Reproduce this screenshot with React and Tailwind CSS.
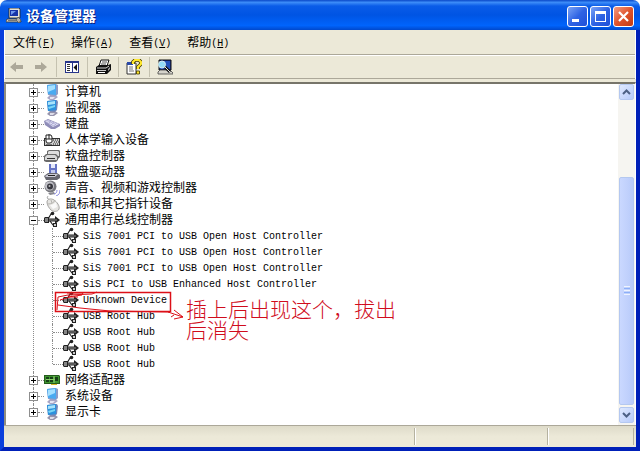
import { useState } from 'react'

const MENUS = [
  { label: '文件', accessKey: 'F' },
  { label: '操作', accessKey: 'A' },
  { label: '查看', accessKey: 'V' },
  { label: '帮助', accessKey: 'H' },
]

const DEVICES = [
  { name: '计算机', icon: ComputerIcon },
  { name: '监视器', icon: MonitorIcon },
  { name: '键盘', icon: KeyboardIcon },
  { name: '人体学输入设备', icon: HidIcon },
  { name: '软盘控制器', icon: FloppyControllerIcon },
  { name: '软盘驱动器', icon: FloppyDriveIcon },
  { name: '声音、视频和游戏控制器', icon: SoundIcon },
  { name: '鼠标和其它指针设备', icon: MouseIcon },
  {
    name: '通用串行总线控制器',
    icon: UsbIcon,
    children: [
      { name: 'SiS 7001 PCI to USB Open Host Controller' },
      { name: 'SiS 7001 PCI to USB Open Host Controller' },
      { name: 'SiS 7001 PCI to USB Open Host Controller' },
      { name: 'SiS PCI to USB Enhanced Host Controller' },
      { name: 'Unknown Device', marked: true },
      { name: 'USB Root Hub' },
      { name: 'USB Root Hub' },
      { name: 'USB Root Hub' },
      { name: 'USB Root Hub' },
    ],
  },
  { name: '网络适配器', icon: NetworkIcon },
  { name: '系统设备', icon: ComputerIcon },
  { name: '显示卡', icon: MonitorIcon },
]

function Icon({ children, className = 'size-4' }) {
  return (
    <svg viewBox="0 0 16 16" className={`shrink-0 ${className}`} aria-hidden="true">
      {children}
    </svg>
  )
}

function ComputerIcon() {
  return (
    <Icon>
      <path d="M3 14l3-3h5l3 2-4 3H6z" fill="#a9a6c4" />
      <path d="M3 1l9-1 2 1v9l-2 2-8-1z" fill="#8c9cc8" />
      <path d="M3 1l9-1v11l-8-1z" fill="#4aaaf0" />
      <path d="M4 2l7-1v4L4 8z" fill="#a5e0ff" />
      <path d="M6 13h5l-2 2H6z" fill="#e6e4f2" />
    </Icon>
  )
}

function MonitorIcon() {
  return (
    <Icon>
      <path d="M3 14l3-3h5l3 2-4 3H6z" fill="#9794ac" />
      <path d="M3 1l10-1 1 2-1 8-2 2-7-1z" fill="#7186ba" />
      <path d="M3 1l9-1v10l-8 1z" fill="#2b91dd" />
      <path d="M4 2l7-1v3L4 5z" fill="#a7e3fb" />
      <path d="M4 7l7-2v2L5 9z" fill="#79d5f5" />
      <path d="M6 13h5l-2 2H6z" fill="#dedde9" />
    </Icon>
  )
}

function KeyboardIcon() {
  return (
    <Icon>
      <path d="M0 5l4-2 12 5v2l-5 3H7L1 9z" fill="#8f8db8" />
      <path d="M1 5l3-1 11 4-6 3z" fill="#e0e0f4" />
      <path d="M2 6l8 4M3 4.500l9 4M4 8l3-3M7 9l3-3M10 10l3-3" stroke="#a3a1cc" strokeWidth=".7" />
    </Icon>
  )
}

function HidIcon() {
  return (
    <Icon>
      <path d="M0 6h16v8H0z" fill="#333" />
      <path d="M1 7h14v6H1z" fill="#d0d0d0" />
      <path d="M9 8h1m1 0h1m1 0h1M10 10h1m1 0h1m1 0h1M9 12h1m1 0h1m1 0h1" stroke="#222" />
      <path d="M2 3h5l1 2v5l-2 1H3L2 9z" fill="#fff" stroke="#222" />
      <path d="M5 2v5M2 7h6" stroke="#222" fill="none" />
      <path d="M2 13h6" stroke="#222" />
    </Icon>
  )
}

function FloppyControllerIcon() {
  return (
    <Icon>
      <path d="M3 3l2-1h10l1 1v6l-2 2H3z" fill="#6a6a6a" />
      <path d="M4 4l1-1h9l1 1v4H4z" fill="#dedede" />
      <path d="M0 8l2-2h10l2 2v4l-2 2H2l-2-1z" fill="#6a6a6a" />
      <path d="M1 9l2-2h8l2 2v3H1z" fill="#d8d8d8" />
      <path d="M3 10h8v1H3z" fill="#333" />
    </Icon>
  )
}

function FloppyDriveIcon() {
  return (
    <Icon>
      <path d="M5 0h8v10H5z" fill="#6674c4" />
      <path d="M7 0h4v4H7z" fill="#e5e9fa" />
      <path d="M7 6h4v4H7z" fill="#c2caef" />
      <path d="M0 12l4-3h9l3 2v3l-3 2H2z" fill="#66666f" />
      <path d="M1 12l4-2h9l-3 3H2z" fill="#c9c9d4" />
      <path d="M4 11h7v1H4z" fill="#222" />
    </Icon>
  )
}

function SoundIcon() {
  return (
    <Icon>
      <circle cx="6.500" cy="6.500" r="6" fill="#77777d" />
      <circle cx="5.500" cy="6" r="4.500" fill="#c2c2c8" />
      <circle cx="6" cy="6.500" r="3" fill="#38383f" />
      <circle cx="5.500" cy="6" r="1" fill="#bbb" />
      <path d="M4 13l6-1 1 2-5 1z" fill="#888890" />
      <path d="M10 14c2 0 3-2 3-4M12 16c3-1 4-3 4-6" stroke="#8a8ae0" fill="none" />
    </Icon>
  )
}

function MouseIcon() {
  return (
    <Icon>
      <path d="M4 0L3 2l3 2" stroke="#aaa" fill="none" />
      <path d="M3 6c0-3 4-4 7-2 3 2 6 6 5 9-1 3-6 3-8 1C5 12 3 9 3 6z" fill="#e6e5e2" stroke="#a5a4a2" />
      <path d="M4 8c3 0 6-1 7-4M7 4l1 3" stroke="#b5b4b0" fill="none" />
      <path d="M6 9c2 0 4-1 6-3l1 5-4 2z" fill="#fafafa" />
    </Icon>
  )
}

function UsbIcon() {
  return (
    <Icon className="size-4 overflow-visible">
      <path d="M4 8h9" stroke="#222" strokeWidth="3" />
      <path d="M4 7l3-5h1M6 9l3 4h1" stroke="#222" strokeWidth="1.200" fill="none" />
      <path d="M0 6l1-1h4v6H1l-1-1z" fill="#222" />
      <path d="M1 6h3v4H1z" fill="#858585" />
      <circle cx="8.500" cy="1.500" r="1.800" fill="#222" />
      <path d="M9 11h4v4H9z" fill="#222" />
      <path d="M10 12h2v2h-2z" fill="#ccc" />
      <path d="M11 4l5 4-5 4z" fill="#222" />
      <path d="M5 8h8" stroke="#8e8e8e" />
    </Icon>
  )
}

function NetworkIcon() {
  return (
    <Icon>
      <path d="M0 3h15l1 1v8h-3v1H7v-1H0z" fill="#245c1c" />
      <path d="M1 4h14v7H1z" fill="#3e9430" />
      <path d="M2 5h3v2H2zM6 5h3v2H6zM2 8h3v2H2zM6 8h3v2H6zM11 5h3v4h-3z" fill="#173f17" />
      <path d="M2 7.500h9M10 4v7" stroke="#8bce6c" />
      <path d="M7 12h6v1H7z" fill="#d8b728" />
    </Icon>
  )
}

function AppIcon() {
  return (
    <Icon>
      <path d="M3 0h10l1 1v9H3z" fill="#e6e3da" stroke="#222" strokeWidth=".8" />
      <path d="M4 2h8v6H4z" fill="#1733a8" />
      <path d="M5 3h5L5 7z" fill="#6f97ee" />
      <path d="M1 11h12l2 2v1H0v-1z" fill="#d6d3ca" stroke="#333" strokeWidth=".8" />
      <path d="M2 12.500h8" stroke="#777" />
      <path d="M12 9l3 3-2 3-3-3z" fill="#b5b2aa" stroke="#555" strokeWidth=".8" />
    </Icon>
  )
}

function BackIcon() {
  return (
    <Icon>
      <path d="M1 8l6-5v3h7v4H7v3z" fill="#aca899" />
    </Icon>
  )
}

function ForwardIcon() {
  return (
    <Icon>
      <path d="M14 8L8 3v3H2v4h6v3z" fill="#aca899" />
    </Icon>
  )
}

function ConsoleTreeIcon() {
  return (
    <Icon>
      <g shapeRendering="crispEdges">
        <path d="M1 2h14v12H1z" fill="#26348a" />
        <path d="M2 4h6v9H2zM9 4h5v9H9z" fill="#fff" />
        <path d="M3 5h3v1H3zM3 7h3v1H3zM3 9h3v1H3zM3 11h3v1H3z" fill="#333" />
      </g>
      <path d="M13 5v7l-3.500-3.500z" fill="#111" />
    </Icon>
  )
}

function PrinterIcon() {
  return (
    <Icon>
      <path d="M6 1h8l-2 6H4z" fill="#fff" stroke="#111" />
      <path d="M7 3h5M6 5h5" stroke="#555" />
      <path d="M1 8l3-2h9l3-1v6l-4 4H1z" fill="#111" />
      <path d="M2 9h9l3-2" stroke="#d5d5d5" fill="none" />
      <path d="M2 11h9v1H2z" fill="#ccc" />
      <path d="M3 13h7v1H3z" fill="#fff" />
      <path d="M13 10l2-2v2l-2 2z" fill="#aaa" />
    </Icon>
  )
}

function HelpIcon() {
  return (
    <Icon>
      <path d="M1 4h9v11H1z" fill="#fff" stroke="#333" />
      <path d="M1 3h6v3H1z" fill="#2b4aa8" />
      <path d="M3 8h4M3 10h4M3 12h5" stroke="#777" />
      <path d="M7 5V3l2-2h4l2 2v2l-3 3v2" fill="none" stroke="#3c3500" strokeWidth="3.600" />
      <path d="M7 5V3l2-2h4l2 2v2l-3 3v2" fill="none" stroke="#ffe72b" strokeWidth="2.200" />
      <path d="M10.500 12h3v3h-3z" fill="#ffe72b" stroke="#3c3500" strokeWidth=".8" />
    </Icon>
  )
}

function ScanIcon() {
  return (
    <Icon>
      <path d="M2 1h12v10H2z" fill="#172c86" stroke="#111" />
      <path d="M3 2h10v8H3z" fill="#2353ba" />
      <path d="M1 13l2-2h10l3 3v1H1z" fill="#d5d3ca" stroke="#444" strokeWidth=".8" />
      <path d="M7 7l6 6" stroke="#111" strokeWidth="3" />
      <path d="M7 7l6 6" stroke="#e6e6e6" />
      <circle cx="5" cy="5.500" r="3.500" fill="#93dcf7" stroke="#d5e8f0" />
    </Icon>
  )
}

function CaptionButton({ label, close, children }) {
  return (
    <button
      type="button"
      aria-label={label}
      className={`flex size-[21px] items-center justify-center rounded-[3px] border border-white ${
        close
          ? 'bg-linear-to-br from-[#f09a80] via-[#e0532b] to-[#c23a10]'
          : 'bg-linear-to-br from-[#7ba2f5] via-[#2f63e4] to-[#1f4fd8]'
      }`}
    >
      <svg viewBox="0 0 19 19" className="size-[19px]" aria-hidden="true">
        {children}
      </svg>
    </button>
  )
}

function TitleBar() {
  return (
    <header className="flex h-[30px] shrink-0 items-center rounded-t-[7px] bg-[linear-gradient(#0a48c8_0%,#3c8cf8_8%,#0a5ce8_20%,#0054e3_50%,#0064fc_85%,#0048cc_100%)] px-1.5 pt-0.5">
      <AppIcon />
      <h1 className="ml-1 flex-1 text-sm font-bold text-white [text-shadow:1px_1px_#0a1f80]">
        设备管理器
      </h1>
      <div className="flex gap-0.5">
        <CaptionButton label="最小化">
          <path d="M4 12h7v3H4z" fill="#fff" />
        </CaptionButton>
        <CaptionButton label="最大化">
          <path d="M4 4h11v11H4zM5 7v7h9V7z" fill="#fff" fillRule="evenodd" />
        </CaptionButton>
        <CaptionButton label="关闭" close>
          <path d="M5 5l9 9M14 5l-9 9" stroke="#fff" strokeWidth="2.200" />
        </CaptionButton>
      </div>
    </header>
  )
}

function MenuBar() {
  return (
    <nav className="flex h-[25px] items-center border-b border-[#aca899] pt-0.5">
      {MENUS.map((menu) => (
        <button key={menu.label} type="button" className="flex items-center px-2 text-xs leading-4">
          {menu.label}
          <span className="pt-0.5 font-['Liberation_Mono',monospace] text-[10px]">
            (<u>{menu.accessKey}</u>)
          </span>
        </button>
      ))}
    </nav>
  )
}

function ToolButton({ label, icon: ToolIcon, disabled }) {
  return (
    <button
      type="button"
      aria-label={label}
      disabled={disabled}
      className="flex size-6 items-center justify-center"
    >
      <ToolIcon />
    </button>
  )
}

function Separator() {
  return <span className="mx-[3px] h-5 w-px bg-[#c5c2b0]" />
}

function Toolbar() {
  return (
    <div role="toolbar" className="flex h-6 items-center border-t border-b border-t-white border-b-[#aca899]">
      <ToolButton label="后退" icon={BackIcon} disabled />
      <ToolButton label="前进" icon={ForwardIcon} disabled />
      <Separator />
      <ToolButton label="显示/隐藏控制台树" icon={ConsoleTreeIcon} />
      <Separator />
      <ToolButton label="打印" icon={PrinterIcon} />
      <Separator />
      <ToolButton label="帮助" icon={HelpIcon} />
      <Separator />
      <ToolButton label="扫描检测硬件改动" icon={ScanIcon} />
    </div>
  )
}

// Hand-drawn red marks and note lying over the unknown device
function Annotation() {
  return (
    <div className="pointer-events-none absolute -top-1 left-0 z-10 flex items-start text-[#d00c1c]">
      <svg viewBox="0 0 134 36" className="h-9 w-[134px] shrink-0" fill="none" stroke="#dc1018" aria-hidden="true">
        <path d="M3.500 4.500h115v19H3.500z" strokeWidth="1.500" />
        <path d="M5 22L6 9l10-2 24-1 5-2M15 5h16l-1 2-14 2M6 17l22 3 30 3 59 1M8 12l10-3h8" />
        <path d="M116 24l15 5M122 22l9 7-9 2M122 27l-3 2" />
      </svg>
      <p className="mt-[11px] w-[214px] text-[21px] leading-[21px] font-light">
        插上后出现这个，拔出后消失
      </p>
    </div>
  )
}

function ChildRow({ device, last }) {
  return (
    <li className="relative flex h-4 items-center">
      <span
        className={`w-0 self-start border-l border-dotted border-[#8c8c8c] ${last ? 'h-2' : 'h-4'}`}
      />
      <span className="w-2.5 border-t border-dotted border-[#8c8c8c]" />
      <UsbIcon />
      <span className="ml-1 pt-0.5 font-['Liberation_Mono',monospace] text-[10px] leading-4 whitespace-nowrap">
        {device.name}
      </span>
      {device.marked && <Annotation />}
    </li>
  )
}

function DeviceRow({ device, last }) {
  const [open, setOpen] = useState(Boolean(device.children))
  const DeviceIcon = device.icon
  return (
    <li>
      <div className="flex h-4 items-center">
        <span className="relative flex h-4 w-[9px] items-center">
          <span
            className={`absolute top-0 left-1 border-l border-dotted border-[#8c8c8c] ${last ? 'h-2' : 'h-4'}`}
          />
          <button
            type="button"
            aria-label={device.name}
            aria-expanded={open}
            onClick={() => setOpen(!open)}
            className="relative size-[9px] bg-white"
          >
            <svg viewBox="0 0 9 9" className="size-[9px]" shapeRendering="crispEdges" aria-hidden="true">
              <path d="M0 0h9v9H0zM1 1v7h7V1z" fill="#8e8e8e" fillRule="evenodd" />
              <path d="M2 4h5v1H2z" />
              {!(open && device.children) && <path d="M4 2h1v5H4z" />}
            </svg>
          </button>
        </span>
        <span className="w-1.5 border-t border-dotted border-[#8c8c8c]" />
        <span className="flex w-[21px]">
          <DeviceIcon />
        </span>
        <span className="text-xs leading-4 whitespace-nowrap">{device.name}</span>
      </div>
      {open && device.children && (
        <ul className="ml-1 border-l border-dotted border-[#8c8c8c] pl-[18px]">
          {device.children.map((child, i) => (
            <ChildRow key={i} device={child} last={i === device.children.length - 1} />
          ))}
        </ul>
      )}
    </li>
  )
}

function ScrollButton({ label, path }) {
  return (
    <button
      type="button"
      aria-label={label}
      className="flex h-4 w-[15px] shrink-0 items-center justify-center rounded-[2px] border border-[#b4c8f0] bg-linear-to-br from-[#dfe9ff] to-[#b7cbfa]"
    >
      <svg viewBox="0 0 9 6" className="h-1.5 w-[9px]" aria-hidden="true">
        <path d={path} fill="none" stroke="#4d6185" strokeWidth="2" />
      </svg>
    </button>
  )
}

function Scrollbar() {
  return (
    <div className="flex w-[17px] shrink-0 flex-col items-center bg-[#f6f5f1] pb-0.5">
      <ScrollButton label="向上滚动" path="M1 5l3.500-3.500L8 5" />
      <div className="flex-[77]" />
      <div className="flex w-[15px] flex-[227] flex-col items-center justify-center gap-px rounded-[2px] border border-[#b4c8f0] bg-linear-to-r from-[#cad8ff] to-[#b9cbfa]">
        <span className="h-px w-1.5 bg-[#eef4fe]" />
        <span className="h-px w-1.5 bg-[#8cb0f8]" />
        <span className="h-px w-1.5 bg-[#eef4fe]" />
        <span className="h-px w-1.5 bg-[#8cb0f8]" />
        <span className="h-px w-1.5 bg-[#eef4fe]" />
      </div>
      <div className="h-0.5" />
      <ScrollButton label="向下滚动" path="M1 1l3.500 3.500L8 1" />
    </div>
  )
}

function StatusBar() {
  return (
    <footer className="flex h-[22px] border-t border-[#aca899] bg-linear-to-b from-[#dedbc9] via-[#ece9d8] to-[#ece9d8] py-0.5 pr-0.5">
      <span className="flex-1 border-r border-[#b5b2a0]" />
      <span className="w-[133px] border-r border-l border-r-[#b5b2a0] border-l-white" />
      <span className="w-[86px] border-r border-l border-r-[#b5b2a0] border-l-white" />
    </footer>
  )
}

export default function App() {
  return (
    <div className="flex min-h-screen flex-col bg-white font-['Liberation_Sans','Noto_Sans_CJK_SC',sans-serif] text-black">
      <TitleBar />
      <div className="flex flex-1 flex-col border-x-4 border-b-4 border-[#0a3fdc] border-r-[#0020b8] border-b-[#0020b8] bg-[#ece9d8]">
        <div className="border-x border-white">
          <MenuBar />
          <Toolbar />
        </div>
        <main className="mt-[3px] flex flex-1 border-t-2 border-r border-l-2 border-t-[#77756a] border-r-white border-l-[#8f8d80] bg-white">
          <ul className="min-w-0 flex-1 pb-1 pl-[23px]">
            {DEVICES.map((device, i) => (
              <DeviceRow key={device.name} device={device} last={i === DEVICES.length - 1} />
            ))}
          </ul>
          <Scrollbar />
        </main>
        <StatusBar />
      </div>
    </div>
  )
}
